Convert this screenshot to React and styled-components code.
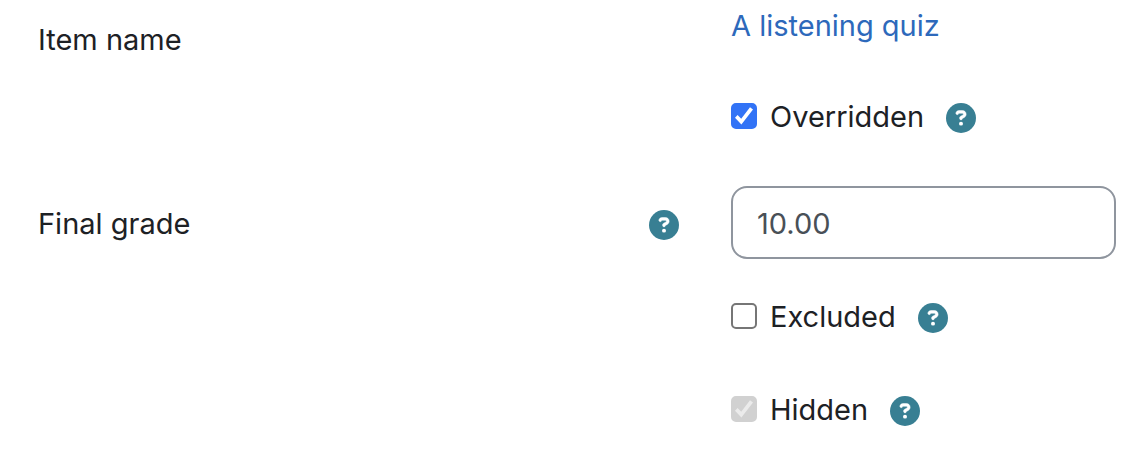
import React from "react";
import styled, { createGlobalStyle } from "styled-components";

const Global = createGlobalStyle`
  * { box-sizing: border-box; }
  body {
    margin: 0;
    background: #fff;
    color: #1d2125;
    font-family: Inter, "Liberation Sans", sans-serif;
    font-size: 29px;
    line-height: 44px;
  }
`;

const Form = styled.form`
  display: grid;
  grid-template-columns: minmax(0, 693fr) minmax(0, 413fr);
  padding: 4px 0 18px 38px;
`;

const LabelCell = styled.div`
  display: flex;
  justify-content: space-between;
  align-items: ${(p) => (p.$top ? "flex-start" : "center")};
  padding: ${(p) => (p.$top ? "14px" : "0")} 52px 0 0;
`;

const GradeLabel = styled.label`
  padding-top: 2px;
`;

const FieldCell = styled.div`
  grid-column: 2;
  display: flex;
  align-items: center;
  padding: ${(p) => p.$pad || "0"};
`;

const ItemLink = styled.a`
  color: #2d69bb;
  text-decoration: none;
`;

const GradeInput = styled.input`
  width: 100%;
  height: 73px;
  margin-right: 28px;
  padding: 2px 24px 0;
  border: 2px solid #8f959e;
  border-radius: 16px;
  background: #fff;
  color: #495057;
  font: inherit;
`;

const CheckLabel = styled.label`
  display: flex;
  align-items: center;
  gap: 13px;
  margin-right: 22px;
`;

const CheckText = styled.span`
  padding-top: 2px;
`;

const BoxWrap = styled.span`
  display: grid;
  width: 26px;
  height: 26px;
  > * { grid-area: 1 / 1; }
`;

const Box = styled.input`
  appearance: none;
  width: 26px;
  height: 26px;
  margin: 0;
  border: 2px solid #767676;
  border-radius: 5px;
  background: #fff;
  &:checked { border-color: #3273f6; background: #3273f6; }
  &:disabled { border-color: #d1d1d1; background: #d1d1d1; }
`;

const Tick = styled.svg`
  z-index: 1;
  pointer-events: none;
  color: ${(p) => (p.$muted ? "#ebebeb" : "#fff")};
`;

const HelpButton = styled.button`
  flex: none;
  width: 30px;
  height: 30px;
  margin: 4px 0 0;
  padding: 0;
  border: 0;
  background: none;
  color: #387f93;
  cursor: pointer;
  svg { display: block; }
`;

function Help({ topic }) {
  return (
    <HelpButton type="button" aria-label={`Help with ${topic}`}>
      <svg width="30" height="30" viewBox="0 0 512 512" aria-hidden="true">
        <circle cx="256" cy="256" r="256" fill="currentColor" />
        <path
          fill="#fff"
          stroke="#fff"
          strokeWidth="8"
          d="M169.8 165.3c7.9-22.3 29.1-37.3 52.8-37.3h58.3c34.9 0 63.1 28.3 63.1 63.1c0 22.6-12.1 43.5-31.7 54.8L280 264.4c-.2 13-10.9 23.6-24 23.6c-13.3 0-24-10.7-24-24V250.5c0-8.6 4.6-16.5 12.1-20.8l44.3-25.4c4.7-2.7 7.6-7.7 7.6-13.1c0-8.4-6.8-15.1-15.1-15.1H222.6c-3.4 0-6.4 2.1-7.5 5.3l-.4 1.2c-4.4 12.5-18.2 19-30.6 14.6s-19-18.2-14.6-30.6l.4-1.2z"
        />
        <circle cx="256" cy="352" r="34" fill="#fff" />
      </svg>
    </HelpButton>
  );
}

function CheckField({ label, pad, ...box }) {
  return (
    <FieldCell $pad={pad}>
      <CheckLabel>
        <BoxWrap>
          <Box type="checkbox" {...box} />
          {box.defaultChecked && (
            <Tick $muted={box.disabled} width="26" height="26" viewBox="0 0 26 26" aria-hidden="true">
              <path d="M4 14.8L6.6 12l3.6 3.7L19 4.2l3 2.3-11.6 14.9z" fill="currentColor" />
            </Tick>
          )}
        </BoxWrap>
        <CheckText>{label}</CheckText>
      </CheckLabel>
      <Help topic={label} />
    </FieldCell>
  );
}

export default function App() {
  return (
    <>
      <Global />
      <Form>
        <LabelCell $top>Item name</LabelCell>
        <FieldCell $pad="0 0 14px">
          <ItemLink href="#quiz">A listening quiz</ItemLink>
        </FieldCell>
        <CheckField label="Overridden" pad="31px 0 47px" defaultChecked />
        <LabelCell>
          <GradeLabel htmlFor="grade">Final grade</GradeLabel>
          <Help topic="Final grade" />
        </LabelCell>
        <FieldCell>
          <GradeInput id="grade" type="text" defaultValue="10.00" />
        </FieldCell>
        <CheckField label="Excluded" pad="34px 0 24px" />
        <CheckField label="Hidden" pad="23px 0" defaultChecked disabled />
      </Form>
    </>
  );
}
